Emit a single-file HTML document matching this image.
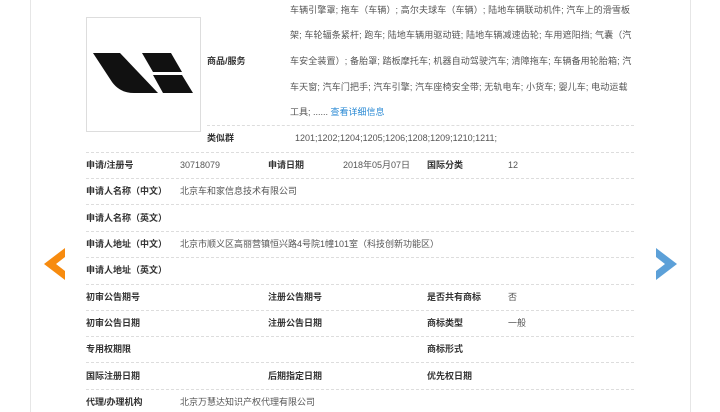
<!DOCTYPE html>
<html><head><meta charset="utf-8"><style>
body{margin:0;width:720px;height:412px;background:#fff;position:relative;overflow:hidden;font-family:"Liberation Sans","Noto Sans CJK SC",sans-serif;font-size:9px;color:#555}
.a{position:absolute;white-space:nowrap;line-height:12px}
.b{font-weight:bold;color:#333}
.d{position:absolute;height:0;border-top:1px dashed #ddd}
.v{position:absolute;top:0;width:1px;height:412px;background:#e6e6e6}
.t{letter-spacing:0.12px}
</style></head><body>
<div class="v" style="left:30px"></div><div class="v" style="left:690px"></div>
<div style="position:absolute;left:86px;top:17px;width:113px;height:113px;border:1px solid #ddd"></div>
<svg style="position:absolute;left:0;top:0" width="720" height="412">
<path d="M93 53 L120 53 L158 93 L134 93 Q120 93 112 82 Z" fill="#111"/>
<path d="M142 53 L171 53 L182 72 L153 72 Z" fill="#111"/>
<path d="M153 75 L182 75 L193 93 L163 93 Z" fill="#111"/>
<path d="M65 248 L44 264 L65 280 L65 271 L56 264 L65 257 Z" fill="#f78b0f"/>
<path d="M656 248 L677 264 L656 280 L656 271 L665 264 L656 257 Z" fill="#5ca0d8"/>
</svg>
<div class="a t" style="left:290px;top:4px">车辆引擎罩; 拖车（车辆）; 高尔夫球车（车辆）; 陆地车辆联动机件; 汽车上的滑雪板</div>
<div class="a t" style="left:290px;top:29px">架; 车轮辐条紧杆; 跑车; 陆地车辆用驱动链; 陆地车辆减速齿轮; 车用遮阳挡; 气囊（汽</div>
<div class="a t" style="left:290px;top:55px">车安全装置）; 备胎罩; 踏板摩托车; 机器自动驾驶汽车; 清障拖车; 车辆备用轮胎箱; 汽</div>
<div class="a t" style="left:290px;top:81px">车天窗; 汽车门把手; 汽车引擎; 汽车座椅安全带; 无轨电车; 小货车; 婴儿车; 电动运载</div>
<div class="a" style="left:290px;top:106px">工具; ...... <span style="color:#2a8ad4">查看详细信息</span></div>
<div class="a b" style="left:207px;top:55px">商品/服务</div>
<div class="d" style="left:207px;top:125px;width:427px"></div>
<div class="a b" style="left:207px;top:132px">类似群</div>
<div class="a" style="left:295px;top:132px">1201;1202;1204;1205;1206;1208;1209;1210;1211;</div>
<div class="d" style="left:86px;top:152px;width:548px"></div>

<div class="a b" style="left:86px;top:159px">申请/注册号</div><div class="a" style="left:180px;top:159px">30718079</div>
<div class="a b" style="left:268px;top:159px">申请日期</div><div class="a" style="left:343px;top:159px">2018年05月07日</div>
<div class="a b" style="left:427px;top:159px">国际分类</div><div class="a" style="left:508px;top:159px">12</div>
<div class="d" style="left:86px;top:178px;width:548px"></div>
<div class="a b" style="left:86px;top:185px">申请人名称（中文）</div><div class="a" style="left:180px;top:185px">北京车和家信息技术有限公司</div>
<div class="d" style="left:86px;top:204px;width:548px"></div>
<div class="a b" style="left:86px;top:212px">申请人名称（英文）</div>
<div class="d" style="left:86px;top:231px;width:548px"></div>
<div class="a b" style="left:86px;top:238px">申请人地址（中文）</div><div class="a" style="left:180px;top:238px">北京市顺义区高丽营镇恒兴路4号院1幢101室（科技创新功能区）</div>
<div class="d" style="left:86px;top:257px;width:548px"></div>
<div class="a b" style="left:86px;top:264px">申请人地址（英文）</div>
<div class="d" style="left:86px;top:284px;width:548px"></div>
<div class="a b" style="left:86px;top:291px">初审公告期号</div><div class="a b" style="left:268px;top:291px">注册公告期号</div>
<div class="a b" style="left:427px;top:291px">是否共有商标</div><div class="a" style="left:508px;top:291px">否</div>
<div class="d" style="left:86px;top:310px;width:548px"></div>
<div class="a b" style="left:86px;top:317px">初审公告日期</div><div class="a b" style="left:268px;top:317px">注册公告日期</div>
<div class="a b" style="left:427px;top:317px">商标类型</div><div class="a" style="left:508px;top:317px">一般</div>
<div class="d" style="left:86px;top:336px;width:548px"></div>
<div class="a b" style="left:86px;top:343px">专用权期限</div>
<div class="a b" style="left:427px;top:343px">商标形式</div>
<div class="d" style="left:86px;top:362px;width:548px"></div>
<div class="a b" style="left:86px;top:370px">国际注册日期</div><div class="a b" style="left:268px;top:370px">后期指定日期</div>
<div class="a b" style="left:427px;top:370px">优先权日期</div>
<div class="d" style="left:86px;top:389px;width:548px"></div>
<div class="a b" style="left:86px;top:396px">代理/办理机构</div><div class="a" style="left:180px;top:396px">北京万慧达知识产权代理有限公司</div>
</body></html>
